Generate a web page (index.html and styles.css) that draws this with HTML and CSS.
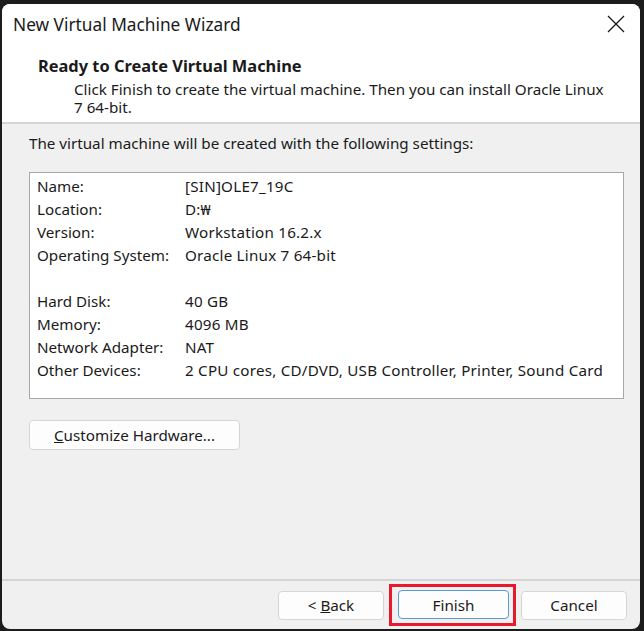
FILE: index.html
```html
<!DOCTYPE html>
<html lang="en">
<head>
    <meta charset="UTF-8">
    <title>New Virtual Machine Wizard</title>
    <link rel="stylesheet" href="styles.css">
</head>
<body>
    <div class="window">
        <div class="titlebar">
            <span class="title">New Virtual Machine Wizard</span>
            <svg class="close" width="18" height="18" viewBox="0 0 18 18">
                <path d="M1 1 L17 17 M17 1 L1 17" stroke="#1a1a1a" stroke-width="1.3" fill="none"/>
            </svg>
        </div>

        <div class="header">
            <h1>Ready to Create Virtual Machine</h1>
            <p>Click Finish to create the virtual machine. Then you can install Oracle Linux 7 64-bit.</p>
        </div>

        <div class="content">
            <p class="intro">The virtual machine will be created with the following settings:</p>
            <div class="settings">
                <div class="row"><span class="label">Name:</span><span class="value">[SIN]OLE7_19C</span></div>
                <div class="row"><span class="label">Location:</span><span class="value">D:&#8361;</span></div>
                <div class="row"><span class="label">Version:</span><span class="value">Workstation 16.2.x</span></div>
                <div class="row"><span class="label">Operating System:</span><span class="value">Oracle Linux 7 64-bit</span></div>
                <div class="row"></div>
                <div class="row"><span class="label">Hard Disk:</span><span class="value">40 GB</span></div>
                <div class="row"><span class="label">Memory:</span><span class="value">4096 MB</span></div>
                <div class="row"><span class="label">Network Adapter:</span><span class="value">NAT</span></div>
                <div class="row"><span class="label">Other Devices:</span><span class="value">2 CPU cores, CD/DVD, USB Controller, Printer, Sound Card</span></div>
            </div>
            <button class="btn customize"><u>C</u>ustomize Hardware...</button>
        </div>

        <div class="footer">
            <button class="btn">&lt; <u>B</u>ack</button>
            <span class="highlight"><button class="btn primary">Finish</button></span>
            <button class="btn">Cancel</button>
        </div>
    </div>
</body>
</html>
```

FILE: styles.css
```css
body {
    margin: 0;
    background-color: #1c1c1c;
    font-family: "Noto Sans", sans-serif;
    color: #1a1a1a;
}
.window {
    box-sizing: border-box;
    width: 638px;
    height: 625px;
    margin: 4px 0 0 2px;
    background-color: #f0f0f0;
    border-radius: 8px;
    overflow: hidden;
    display: flex;
    flex-direction: column;
}
.titlebar {
    background-color: white;
    height: 40px;
    flex-shrink: 0;
    display: flex;
    align-items: center;
    justify-content: space-between;
    padding: 0 15px 0 11px;
}
.title {
    font-size: 17.3px;
}
.header {
    background-color: white;
    padding: 12px 20px 6px 36px;
    border-bottom: 2px solid #d4d4d4;
}
h1 {
    font-size: 16.4px;
    line-height: 20px;
    font-weight: bold;
    margin: 0 0 4px 0;
}
.header p {
    font-size: 15.2px;
    line-height: 18px;
    width: 540px;
    margin: 0 0 0 36px;
}
.content {
    flex: 1;
    padding: 9px 16px 0 27px;
}
.intro {
    font-size: 15.2px;
    line-height: 20px;
    margin: 0 0 19px 0;
}
.settings {
    background-color: white;
    border: 1px solid #a8a8a8;
    height: 227px;
    box-sizing: border-box;
    padding: 2px 0 0 7px;
    font-size: 15.2px;
}
.row {
    height: 23px;
    line-height: 23px;
    display: flex;
}
.label {
    width: 148px;
}
.value {
    letter-spacing: 0.22px;
}
.btn {
    font-family: inherit;
    font-size: 15.2px;
    color: #1a1a1a;
    background-color: #fdfdfd;
    border: 1px solid #d6d6d6;
    border-radius: 4px;
    height: 29px;
    padding: 0;
}
.customize {
    width: 211px;
    height: 30px;
    margin-top: 21px;
}
.footer {
    border-top: 2px solid #d4d4d4;
    height: 48px;
    flex-shrink: 0;
    display: flex;
    align-items: center;
    justify-content: flex-end;
    gap: 5px;
    padding-right: 13px;
}
.footer .btn {
    width: 106px;
}
.highlight {
    border: 3px solid #e8192c;
    padding: 3px 4px 4px 6px;
    display: flex;
}
.footer .primary {
    width: 111px;
    border: 1px solid #5a9bd8;
}
```
